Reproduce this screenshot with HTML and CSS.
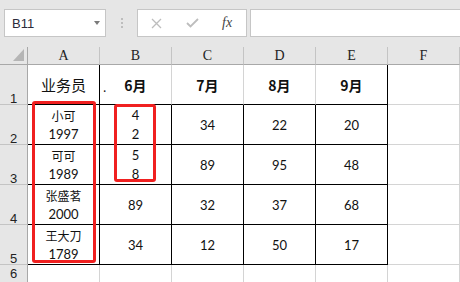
FILE: index.html
```html
<!DOCTYPE html>
<html lang="zh">
<head>
    <meta charset="UTF-8">
    <title>业务员</title>
    <link rel="stylesheet" href="styles.css">
</head>
<body>
    <div class="toolbar">
        <div class="namebox"><span class="ref">B11</span><span class="drop"></span></div>
        <div class="grip"><i></i><i></i><i></i></div>
        <div class="fxbox">
            <svg class="cancel" width="11" height="11" viewBox="0 0 11 11"><path d="M1 1L10 10M10 1L1 10" stroke="#bdbdbd" stroke-width="1.3" fill="none"/></svg>
            <svg class="enter" width="13" height="10" viewBox="0 0 13 10"><path d="M1 5L4.5 8.5L12 1" stroke="#bdbdbd" stroke-width="1.8" fill="none"/></svg>
            <span class="fx">fx</span>
        </div>
        <div class="formula"></div>
    </div>

    <div class="sheet">
        <div class="corner"><svg width="11" height="12" viewBox="0 0 11 12"><path d="M11 0L11 12L0 12Z" fill="#b5b5b5"/></svg></div>
        <div class="hd">A</div>
        <div class="hd">B</div>
        <div class="hd">C</div>
        <div class="hd">D</div>
        <div class="hd">E</div>
        <div class="hd">F</div>

        <div class="rh">1</div>
        <div class="c bb br title">业务员</div>
        <div class="c bb month dotted"><span class="dot">.</span>6月</div>
        <div class="c bb month">7月</div>
        <div class="c bb month">8月</div>
        <div class="c bb br month">9月</div>
        <div class="c"></div>

        <div class="rh">2</div>
        <div class="c bb br two"><span class="cn">小可</span><span>1997</span></div>
        <div class="c bb br two"><span>4</span><span>2</span></div>
        <div class="c bb br">34</div>
        <div class="c bb br">22</div>
        <div class="c bb br">20</div>
        <div class="c"></div>

        <div class="rh">3</div>
        <div class="c bb br two"><span class="cn">可可</span><span>1989</span></div>
        <div class="c bb br two"><span>5</span><span>8</span></div>
        <div class="c bb br">89</div>
        <div class="c bb br">95</div>
        <div class="c bb br">48</div>
        <div class="c"></div>

        <div class="rh">4</div>
        <div class="c bb br two"><span class="cn">张盛茗</span><span>2000</span></div>
        <div class="c bb br">89</div>
        <div class="c bb br">32</div>
        <div class="c bb br">37</div>
        <div class="c bb br">68</div>
        <div class="c"></div>

        <div class="rh">5</div>
        <div class="c bb br two"><span class="cn">王大刀</span><span>1789</span></div>
        <div class="c bb br">34</div>
        <div class="c bb br">12</div>
        <div class="c bb br">50</div>
        <div class="c bb br">17</div>
        <div class="c"></div>

        <div class="rh last">6</div>
        <div class="c"></div>
        <div class="c"></div>
        <div class="c"></div>
        <div class="c"></div>
        <div class="c"></div>
        <div class="c"></div>

        <div class="mark mark-a"></div>
        <div class="mark mark-b"></div>
    </div>
</body>
</html>
```

FILE: styles.css
```css
body {
    margin: 0;
    background-color: #e6e6e6;
    font-family: "Liberation Sans", Arial, sans-serif;
    overflow: hidden;
}

.toolbar {
    display: flex;
    align-items: flex-start;
    height: 47px;
    padding: 9px 0 0 4px;
    box-sizing: border-box;
}

.namebox {
    display: flex;
    align-items: center;
    justify-content: space-between;
    width: 102px;
    height: 28px;
    padding: 0 5px 0 7px;
    box-sizing: border-box;
    background: #fff;
    border: 1px solid #c6c6c6;
}

.ref {
    font-size: 13px;
    color: #2b2b3a;
}

.drop {
    width: 0;
    height: 0;
    border-left: 3.5px solid transparent;
    border-right: 3.5px solid transparent;
    border-top: 4px solid #7a7a7a;
}

.grip {
    display: flex;
    flex-direction: column;
    align-items: center;
    justify-content: center;
    gap: 2px;
    width: 31px;
    height: 28px;
}

.grip i {
    display: block;
    width: 2px;
    height: 2px;
    background: #bdbdbd;
}

.fxbox {
    display: flex;
    align-items: center;
    width: 110px;
    height: 28px;
    box-sizing: border-box;
    background: #fff;
    border: 1px solid #c6c6c6;
}

.cancel {
    margin-left: 13px;
}

.enter {
    margin-left: 24px;
}

.fx {
    margin-left: 23px;
    font-family: "Liberation Serif", serif;
    font-style: italic;
    font-size: 14px;
    color: #444;
}

.formula {
    flex: 1;
    height: 28px;
    margin-left: 3px;
    margin-right: -20px;
    box-sizing: border-box;
    background: #fff;
    border: 1px solid #c6c6c6;
}

.sheet {
    position: relative;
    display: grid;
    grid-template-columns: 28px repeat(6, 72px);
    grid-template-rows: 18px repeat(5, 40px) 18px;
}

.sheet > div {
    box-sizing: border-box;
}

.corner {
    display: flex;
    align-items: flex-end;
    justify-content: flex-end;
    padding: 0 3px 3px 0;
    border-right: 1px solid #a8a8a8;
    border-bottom: 1px solid #a8a8a8;
}

.hd {
    display: flex;
    align-items: center;
    justify-content: center;
    font-family: "Liberation Serif", serif;
    font-size: 14px;
    color: #222;
    border-right: 1px solid #c4c4c4;
    border-bottom: 1px solid #a8a8a8;
}

.rh {
    display: flex;
    align-items: flex-end;
    justify-content: center;
    font-size: 13px;
    line-height: 11px;
    color: #222;
    border-right: 1px solid #a8a8a8;
    border-bottom: 1px solid #c4c4c4;
}

.rh.last {
    align-items: flex-start;
    padding-top: 3px;
}

.c {
    display: flex;
    align-items: center;
    justify-content: center;
    background: #fff;
    font-family: Lato, "Noto Sans CJK SC", sans-serif;
    font-size: 13px;
    color: #111;
    border-right: 1px solid #d4d4d4;
    border-bottom: 1px solid #d4d4d4;
}

.c.bb {
    border-bottom-color: #000;
}

.c.br {
    border-right-color: #000;
}

.two {
    flex-direction: column;
    line-height: 19px;
}

.cn {
    font-family: "Noto Sans CJK SC", sans-serif;
    font-size: 12px;
}

.title {
    font-family: "Noto Sans CJK SC", sans-serif;
    font-size: 15px;
}

.month {
    font-family: "Noto Sans CJK SC", sans-serif;
    font-size: 14px;
    font-weight: bold;
}

.dotted {
    position: relative;
}

.dot {
    position: absolute;
    left: 3px;
    top: 13px;
    font-size: 12px;
    font-weight: normal;
}

.mark {
    position: absolute;
    border: 3px solid #f02020;
    border-radius: 3px;
    box-sizing: border-box;
}

.mark-a {
    left: 32px;
    top: 54px;
    width: 64px;
    height: 162px;
}

.mark-b {
    left: 114px;
    top: 57px;
    width: 42px;
    height: 78px;
}
```
